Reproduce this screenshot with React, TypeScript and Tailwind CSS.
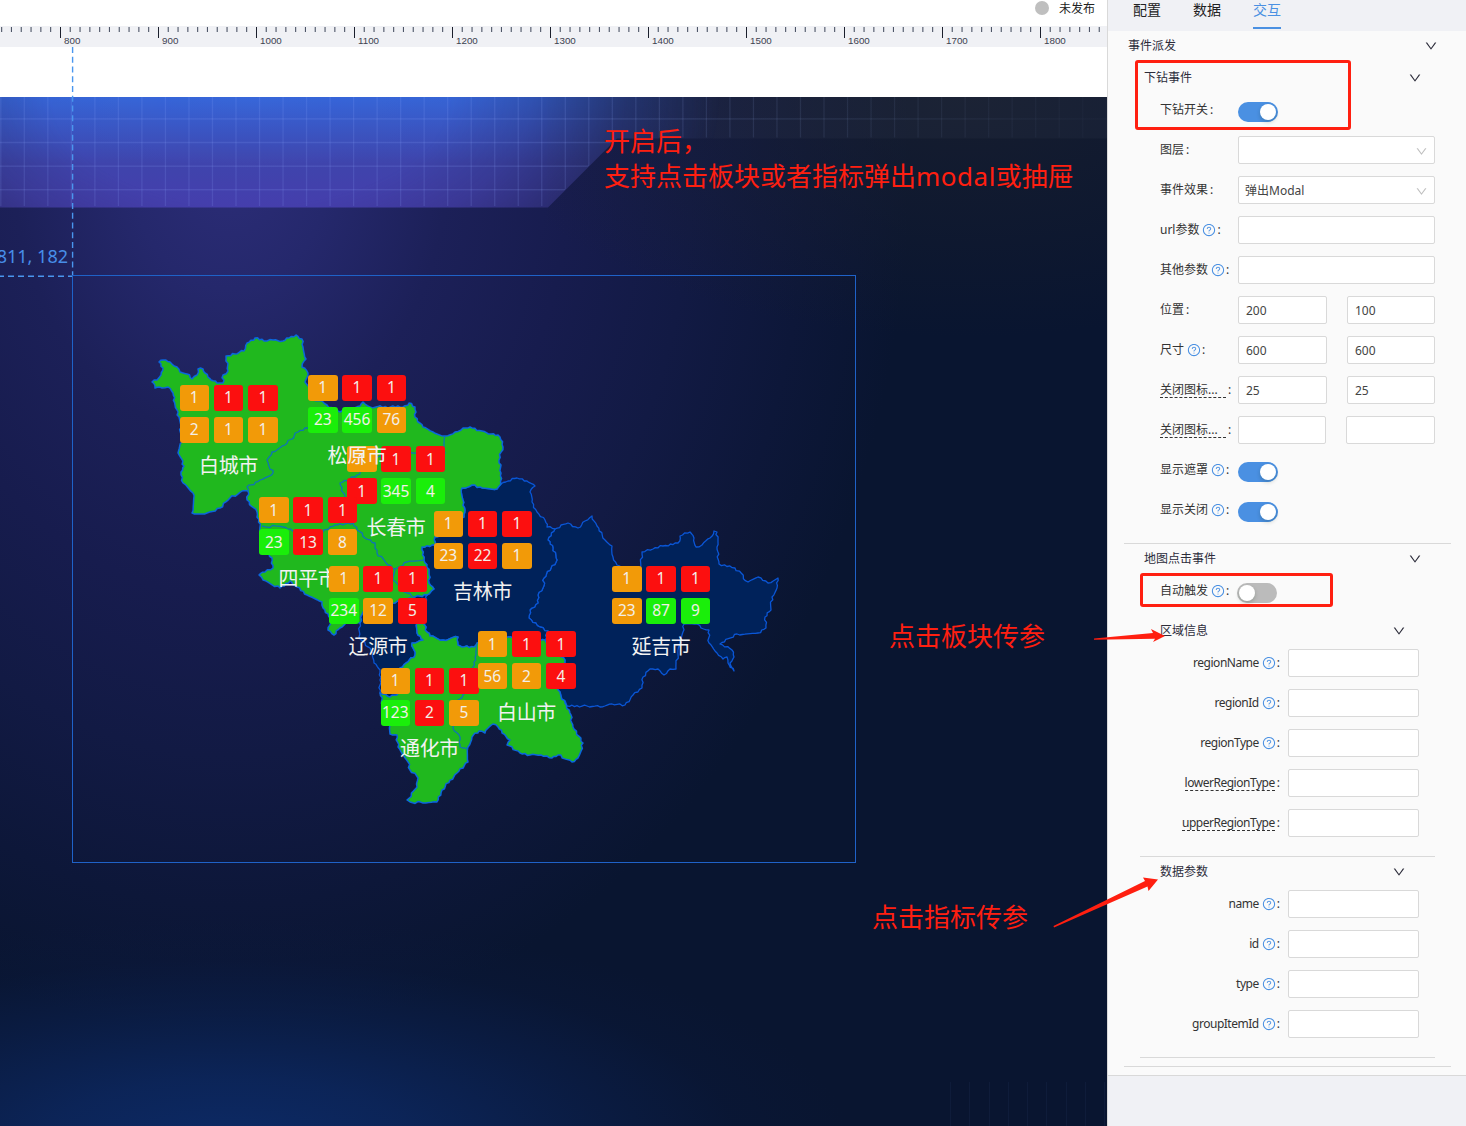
import React from "react";
import { AiOutlineDown, AiOutlineQuestionCircle } from "react-icons/ai";

type Tone = "o" | "r" | "g";
type City = { name: string; x: number; y: number; cells: [string, Tone][] };

const toneClass: Record<Tone, string> = {
  o: "bg-[#f29a08]",
  r: "bg-[#fc0f0f]",
  g: "bg-[#1aee0a]",
};

const top3: [string, Tone][] = [["1", "o"], ["1", "r"], ["1", "r"]];

const cities: City[] = [
  { name: "白城市", x: 179.5, y: 384.5, cells: [...top3, ["2", "o"], ["1", "o"], ["1", "o"]] },
  { name: "长春市", x: 347, y: 446, cells: [...top3, ["1", "r"], ["345", "g"], ["4", "g"]] },
  { name: "松原市", x: 308, y: 374.5, cells: [...top3, ["23", "g"], ["456", "g"], ["76", "o"]] },
  { name: "四平市", x: 259, y: 497, cells: [...top3, ["23", "g"], ["13", "r"], ["8", "o"]] },
  { name: "吉林市", x: 433.5, y: 510.5, cells: [...top3, ["23", "o"], ["22", "r"], ["1", "o"]] },
  { name: "辽源市", x: 329, y: 565.5, cells: [...top3, ["234", "g"], ["12", "o"], ["5", "r"]] },
  { name: "通化市", x: 380.5, y: 667.5, cells: [...top3, ["123", "g"], ["2", "r"], ["5", "o"]] },
  { name: "白山市", x: 477.5, y: 631, cells: [...top3, ["56", "o"], ["2", "o"], ["4", "r"]] },
  { name: "延吉市", x: 612, y: 565.5, cells: [...top3, ["23", "o"], ["87", "g"], ["9", "g"]] },
];

const northWest =
  "152,382 157,380 161,375 163,368 159,362 163,360 170,362 177,367 180,372 187,374 192,379 197,375 198,369 203,369 205,373 208,377 211,380 217,383 223,383 223,375 228,371 226,356 235,354 244,351 247,343 255,338 264,341 273,340 283,341 289,338 296,335 302,339 303,347 306,359 302,367 308,373 305,382 309,387 313,400 322,401 327,405 340,412 348,410 360,406 363,402 370,407 403,407 409,403 415,407 415,417 423,427 433,432 445,436 455,432 463,428 470,427 482,431 491,434 500,437 503,447 499,460 501,473 501,484 497,489 480,487 472,485 462,488 463,500 465,510 464,517 450,530 435,537 435,545 422,547 424,560 429,572 429,583 434,589 427,595 415,597 407,599 395,603 373,608 363,612 360,623 346,623 340,628 334,635 328,630 331,618 323,608 322,602 307,595 297,587 290,581 280,588 263,580 259,575 265,572 273,568 272,558 263,547 260,527 257,512 247,500 248,491 242,491 230,498 220,508 207,513 192,513 193,493 183,483 181,472 184,466 178,453 182,442 179,417 175,405 173,393 168,387 162,388 155,388";

const jilin =
  "501,484 508,481 517,478 527,481 535,486 530,492 532,502 537,512 545,520 547,527 555,529 548,540 553,548 557,560 544,578 543,588 538,595 538,603 530,610 529,618 540,627 548,631 545,640 508,637 477,643 474,647 462,647 458,645 458,637 443,640 430,636 427,632 423,623 424,607 427,595 434,589 429,583 429,572 424,560 422,547 435,545 435,537 450,530 464,517 465,510 463,500 462,488 472,485 480,487 497,489";

const yanji =
  "555,529 568,523 578,528 585,521 592,516 597,526 605,540 612,546 613,557 617,565 628,571 641,570 642,552 653,549 663,546 678,543 680,536 690,532 694,538 696,547 702,545 710,538 714,531 717,532 717,547 719,564 735,568 748,582 758,577 768,583 778,578 777,588 772,597 771,610 765,617 766,628 758,633 737,634 720,644 732,650 734,657 730,663 734,671 728,663 727,657 723,659 717,653 709,643 709,630 701,628 697,624 684,624 682,635 678,650 676,669 670,669 664,675 658,669 650,669 643,677 642,688 633,695 625,705 612,704 600,707 587,706 567,706 558,690 565,660 545,640 548,631 540,627 529,618 530,610 538,603 538,595 543,588 544,578 557,560 553,548 548,540";

const liaoyuan =
  "363,612 373,608 395,603 407,599 415,597 427,595 424,607 423,623 417,623 417,633 423,640 412,643 415,655 406,663 400,668 403,683 397,695 390,697 380,693 380,680 380,670 374,663 373,653 359,637 360,623";

const south =
  "417,623 423,623 427,632 430,636 443,640 458,637 458,645 462,647 474,647 477,643 508,637 545,640 556,651 565,660 558,690 565,703 570,713 573,727 583,743 578,758 572,762 558,755 552,758 541,755 530,755 520,753 507,745 510,740 502,733 498,727 493,724 485,733 479,731 472,737 468,747 468,762 457,773 442,790 437,802 423,803 410,802 407,800 417,787 418,778 410,770 408,762 398,747 397,735 390,734 390,725 385,713 380,693 390,697 397,695 403,683 400,668 406,663 415,655 412,643 423,640 417,633";

const borders = [
  "308,428 298,432 285,445 272,452 267,460 273,473 260,480 247,487 248,492",
  "445,436 445,453 413,453 380,456 357,475 340,483 345,497 353,523 335,525 320,533 297,533 283,527 262,526",
  "353,523 365,538 375,543 377,553 388,565 395,569 393,580 407,593 415,597",
  "395,569 407,562 424,560",
  "477,643 476,655 473,667 463,695 450,707 453,728 460,737 460,747 468,750",
];

/* Breaks every edge into short pieces with a small fixed offset, so borders look surveyed. */
function rough(points: string, closed: boolean): string {
  const pts = points.split(" ").map((p) => p.split(",").map(Number));
  const out: string[] = [];
  const count = closed ? pts.length : pts.length - 1;
  for (let i = 0; i < count; i++) {
    const [ax, ay] = pts[i];
    const [bx, by] = pts[(i + 1) % pts.length];
    // The offset is measured from the lesser endpoint so shared edges coincide.
    const swap = ax > bx || (ax === bx && ay > by);
    const [sx, sy, ex, ey] = swap ? [bx, by, ax, ay] : [ax, ay, bx, by];
    const len = Math.hypot(ex - sx, ey - sy);
    const n = Math.max(1, Math.round(len / 2.6));
    const seg: string[] = [];
    for (let k = 1; k < n; k++) {
      const t = k / n;
      const h = Math.sin(sx * 12.9 + sy * 78.2 + k * 37.7) * 43758.5;
      const d = (h - Math.floor(h) - 0.5) * 2.4;
      const px = sx + (ex - sx) * t - ((ey - sy) / len) * d;
      const py = sy + (ey - sy) * t + ((ex - sx) / len) * d;
      seg.push(`${px.toFixed(1)} ${py.toFixed(1)}`);
    }
    if (swap) seg.reverse();
    out.push(`${ax} ${ay}`, ...seg);
  }
  if (!closed) out.push(pts[pts.length - 1].join(" "));
  return "M" + out.join("L") + (closed ? "Z" : "");
}

function RegionMap() {
  return (
    <svg className="absolute left-0 top-0" width="1107" height="1029" viewBox="0 97 1107 1029" fill="none" strokeLinejoin="round">
      <g stroke="#0a56d6" strokeWidth="1.3">
        <path d={rough(yanji, true)} fill="#00225a" />
        <path d={rough(jilin, true)} fill="#00225a" />
        <path d={rough(liaoyuan, true)} fill="#00225a" />
      </g>
      <g stroke="#0b66dc" strokeWidth="1.5">
        <path d={rough(northWest, true)} fill="#20b81e" />
        <path d={rough(south, true)} fill="#20b81e" />
      </g>
      <g stroke="#0e74b4" strokeWidth="1.3">
        {borders.map((b) => (
          <path key={b} d={rough(b, false)} />
        ))}
      </g>
    </svg>
  );
}

function CityMarker({ city }: { city: City }) {
  return (
    <div className="absolute w-[98px]" style={{ left: city.x, top: city.y - 97 }}>
      <div className="grid grid-cols-[repeat(3,29.5px)] gap-x-[4.8px] gap-y-[6px]">
        {city.cells.map(([v, t], i) => (
          <div key={i} className={`flex h-[26px] items-center justify-center rounded-[3px] pt-px text-[15.5px] leading-none text-[#f3efe8] ${toneClass[t]}`}>
            {v}
          </div>
        ))}
      </div>
      <div className="mt-[8.5px] text-center text-[20px] leading-[30px] tracking-[-0.3px] text-[#f2f2f2]">{city.name}</div>
    </div>
  );
}

function HeaderBand() {
  const xs = Array.from({ length: 48 }, (_, i) => 0.7 + i * 23.52);
  const ys = [21.7, 45.3, 69, 92.5];
  return (
    <svg className="absolute left-0 top-0" width="1107" height="112" viewBox="0 0 1107 112">
      <defs>
        <linearGradient id="band" x1="0" x2="0" y1="0" y2="111" gradientUnits="userSpaceOnUse">
          <stop offset="0" stopColor="#3767da" />
          <stop offset="0.3" stopColor="#3b56c4" />
          <stop offset="0.6" stopColor="#4045ae" />
          <stop offset="1" stopColor="#463fae" />
        </linearGradient>
        <radialGradient id="bandFade" cx="0" cy="0" r="1" gradientUnits="userSpaceOnUse" gradientTransform="translate(250 0) scale(470 260)">
          <stop offset="0" stopColor="#fff" />
          <stop offset="0.42" stopColor="#f6f6f6" />
          <stop offset="0.6" stopColor="#b4b4b4" />
          <stop offset="0.8" stopColor="#444" />
          <stop offset="1" stopColor="#000" />
        </radialGradient>
        <mask id="bandMask" maskUnits="userSpaceOnUse" x="0" y="0" width="1107" height="112">
          <rect width="1107" height="112" fill="url(#bandFade)" />
        </mask>
        <linearGradient id="gridLine" x1="0" x2="1107" y1="0" y2="0" gradientUnits="userSpaceOnUse">
          <stop offset="0" stopColor="#90aaff" stopOpacity="0.15" />
          <stop offset="0.5" stopColor="#90aaff" stopOpacity="0.16" />
          <stop offset="0.75" stopColor="#90aadd" stopOpacity="0.11" />
          <stop offset="1" stopColor="#90aadd" stopOpacity="0.02" />
        </linearGradient>
        <clipPath id="bandClip">
          <path d="M0 0H1107V40.500H617L548 109.500H0Z" />
        </clipPath>
      </defs>
      <path d="M0 0H1107V41.500H617L548 110.500H0Z" fill="#8088a0" fillOpacity="0.06" />
      <path d="M0 0H1107V41.500H617L548 110.500H0Z" fill="url(#band)" mask="url(#bandMask)" />
      <g clipPath="url(#bandClip)" fill="url(#gridLine)">
        {xs.map((x) => (
          <rect key={x} x={x - 0.5} y="0" width="1.2" height="109" />
        ))}
        {ys.map((y) => (
          <rect key={y} x="0" y={y - 0.5} width="1107" height="1.4" />
        ))}
      </g>
    </svg>
  );
}

function Ruler() {
  const ticks = Array.from({ length: 114 }, (_, i) => i - 6);
  return (
    <svg className="block h-[21px] w-full bg-[#f0f1f5]" viewBox="0 0 1107 21" fontFamily="Liberation Sans, Arial, sans-serif" fontSize="9.8">
      {ticks.map((i) => {
        const x = 60.4 + i * 9.8;
        const major = i % 10 === 0;
        return (
          <g key={i}>
            <rect x={major ? Math.round(x) : x - 0.5} y="1" width={major ? 1 : 1.1} height={major ? 11 : 5} fill={major ? "#1b1f2c" : "#4d5567"} />
            {major && <text x={x + 3.6} y="18" fill="#3d4150">{800 + i * 10}</text>}
          </g>
        );
      })}
    </svg>
  );
}

function Note({ className, children }: { className: string; children: React.ReactNode }) {
  return <div className={`absolute whitespace-nowrap text-[26px] leading-[35px] text-[#ff1f10] ${className}`}>{children}</div>;
}

function Workspace() {
  return (
    <main className="flex w-[1107px] flex-col bg-white">
      <header className="flex h-[26px] items-start justify-end pr-[12px]">
        <span className="mt-[1px] h-[14px] w-[14px] rounded-full bg-[#bfbfbf]" />
        <span className="ml-[10px] text-[12px] leading-[17px] text-[#222]">未发布</span>
      </header>
      <Ruler />
      <div className="h-[50px]" />
      <section className="relative h-[1029px] overflow-hidden bg-[#091530]">
        <div className="absolute inset-0 bg-[radial-gradient(ellipse_680px_880px_at_230px_60px,#2c2d78_0%,#25286c_15%,#1c2058_32%,#171c4e_50%,#121a44_68%,#0d1739_85%,#091530_100%)]" />
        <div className="absolute inset-0 bg-[radial-gradient(ellipse_620px_230px_at_230px_1050px,#0c2a66_0%,#0c265ce6_30%,#0b204e99_60%,#0a1a4040_82%,#09153000_100%)]" />
        <div className="absolute inset-y-0 right-0 h-[260px] w-[560px] bg-[radial-gradient(ellipse_500px_240px_at_420px_0px,rgba(30,34,46,0.6),transparent)]" />
        <HeaderBand />
        <RegionMap />
        {cities.map((c) => (
          <CityMarker key={c.name} city={c} />
        ))}
        <div className="absolute left-[72px] top-[178px] h-[588px] w-[784px] border border-[#1f62c8]" />
        <div className="absolute right-[1039px] top-[146px] whitespace-nowrap text-[18px] leading-[26px] text-[#478ee8]">811, 182</div>
        <div className="absolute bottom-0 right-0 h-[44px] w-[157px] bg-[repeating-linear-gradient(90deg,rgba(90,120,190,0.07)_0_1px,transparent_1px_19.300px)]" />
        <Note className="left-[604px] top-[27px]">
          开启后，
          <br />
          支持点击板块或者指标弹出<span className="tracking-[0.5px]">modal</span>或抽屉
        </Note>
        <Note className="left-[889px] top-[522px]">点击板块传参</Note>
        <Note className="left-[872px] top-[803px]">点击指标传参</Note>
      </section>
    </main>
  );
}

function Help() {
  return <AiOutlineQuestionCircle className="-mr-px -mt-px ml-[3px] h-[14px] w-[14px] shrink-0 text-[#4a90e2]" />;
}

function Label({ text, help, dashed }: { text: string; help?: boolean; dashed?: boolean }) {
  return (
    <span className="flex items-center whitespace-nowrap">
      <span className={dashed ? "border-b border-dashed border-[#333] leading-[15px]" : "leading-[18px]"}>{text}</span>
      {help && <Help />}
      <span className="ml-[2px]">:</span>
    </span>
  );
}

function Row({ text, help, children }: { text: string; help?: boolean; children: React.ReactNode }) {
  return (
    <div className="flex h-[40px] items-center pl-[52px]">
      <div className="w-[78px]">
        <Label text={text} help={help} />
      </div>
      {children}
    </div>
  );
}

function TruncatedRow({ children }: { children: React.ReactNode }) {
  return (
    <div className="flex h-[40px] items-center pl-[52px]">
      <div className="flex w-[78px] items-center">
        <span className="w-[66px] border-b border-dashed border-[#333] leading-[15px]">关闭图标...</span>
        <span className="ml-[2px]">:</span>
      </div>
      {children}
    </div>
  );
}

function Box({ className, children }: { className: string; children?: React.ReactNode }) {
  return (
    <div className={`flex h-[28px] items-center justify-between rounded-[2px] border border-[#d9d9d9] bg-white px-[7px] pt-[2px] text-[#444] ${className}`}>
      {children}
    </div>
  );
}

function Select({ value }: { value?: string }) {
  return (
    <Box className="w-[197px]">
      <span className="-ml-px">{value}</span>
      <AiOutlineDown className="-mr-px h-[13px] w-[13px] text-[#bfbfbf]" />
    </Box>
  );
}

function Toggle({ on }: { on?: boolean }) {
  return (
    <span className={on ? "mt-[4px] flex h-[20px] w-[40px] items-center justify-end rounded-full bg-[#4a90e2] px-[2px]" : "-ml-px mt-[4px] flex h-[20px] w-[40px] items-center rounded-full bg-[#bbbbbb] px-[2px]"}>
      <span className="h-[16px] w-[16px] rounded-full bg-white shadow-[0_2px_4px_rgba(0,35,11,0.2)]" />
    </span>
  );
}

function SectionHead({ title, className }: { title: string; className: string }) {
  return (
    <div className={`flex items-center justify-between text-[#2c2c3a] ${className}`}>
      <span>{title}</span>
      <AiOutlineDown className="h-[14px] w-[14px]" />
    </div>
  );
}

function ParamRow({ text, dashed }: { text: string; dashed?: boolean }) {
  return (
    <div className="flex h-[40px] items-center justify-end pr-[47px] tracking-[-0.48px]">
      <Label text={text} help={!dashed} dashed={dashed} />
      <Box className="ml-[8.5px] w-[131px]" />
    </div>
  );
}

function SidePanel() {
  return (
    <aside className="relative flex w-[359px] flex-col border-l border-[#d9d9d9] bg-[#f0f1f5] text-[12px] leading-[18px] text-[#333]">
      <nav className="flex h-[31px] gap-[32px] pl-[25px] text-[14px] leading-[20px] text-[#222]">
        <span>配置</span>
        <span>数据</span>
        <span className="h-[29px] border-b-2 border-[#4a90e2] text-[#4a90e2]">交互</span>
      </nav>
      <div className="h-[1045px] border-b border-[#d9d9d9] bg-[#fafafa]">
        <SectionHead title="事件派发" className="h-[29px] pl-[20px] pr-[28px]" />
        <SectionHead title="下钻事件" className="h-[30px] pl-[36px] pr-[44px] pt-[5px]" />
        <Row text="下钻开关"><Toggle on /></Row>
        <Row text="图层"><Select /></Row>
        <Row text="事件效果"><Select value="弹出Modal" /></Row>
        <Row text="url参数" help><Box className="w-[197px]" /></Row>
        <Row text="其他参数" help><Box className="w-[197px]" /></Row>
        <Row text="位置"><Box className="w-[89px]">200</Box><Box className="ml-[20px] w-[88px]">100</Box></Row>
        <Row text="尺寸" help><Box className="w-[89px]">600</Box><Box className="ml-[20px] w-[88px]">600</Box></Row>
        <TruncatedRow><Box className="w-[89px]">25</Box><Box className="ml-[20px] w-[88px]">25</Box></TruncatedRow>
        <TruncatedRow><Box className="w-[88px]" /><Box className="ml-[20px] w-[89px]" /></TruncatedRow>
        <Row text="显示遮罩" help><Toggle on /></Row>
        <Row text="显示关闭" help><Toggle on /></Row>
        <div className="ml-[16px] mr-[15px] mt-[13px] h-px bg-[#d9d9d9]" />
        <SectionHead title="地图点击事件" className="h-[28px] pl-[36px] pr-[44px] pt-px" />
        <div className="-mt-px"><Row text="自动触发" help><Toggle /></Row></div>
        <SectionHead title="区域信息" className="h-[32px] pl-[52px] pr-[60px] pt-[7px]" />
        <ParamRow text="regionName" />
        <ParamRow text="regionId" />
        <ParamRow text="regionType" />
        <ParamRow text="lowerRegionType" dashed />
        <ParamRow text="upperRegionType" dashed />
        <div className="ml-[32px] mr-[31px] mt-[13px] h-px bg-[#d9d9d9]" />
        <SectionHead title="数据参数" className="h-[27px] pl-[52px] pr-[60px] pt-[2px]" />
        <ParamRow text="name" />
        <ParamRow text="id" />
        <ParamRow text="type" />
        <ParamRow text="groupItemId" />
        <div className="ml-[32px] mr-[31px] mt-[13px] h-px bg-[#d9d9d9]" />
        <div className="ml-[16px] mr-[15px] mt-[8px] h-px bg-[#d9d9d9]" />
      </div>
      <div className="absolute left-[27px] top-[60px] h-[70px] w-[216px] rounded-[3px] border-[3px] border-[#ff1f10]" />
      <div className="absolute left-[32px] top-[573px] h-[34px] w-[193px] rounded-[3px] border-[3px] border-[#ff1f10]" />
    </aside>
  );
}

export default function App() {
  return (
    <div className="relative flex h-[1126px] w-[1466px] overflow-hidden font-['Noto_Sans','Noto_Sans_CJK_SC',sans-serif]">
      <Workspace />
      <SidePanel />
      <svg className="pointer-events-none absolute left-0 top-0" width="1466" height="1126" fill="none">
        <path d="M72.600 47V275" stroke="#4a96ee" strokeWidth="1.400" strokeDasharray="6 3.750" />
        <path d="M0 276.300H72" stroke="#4a96ee" strokeWidth="1.400" strokeDasharray="6 4" strokeDashoffset="2" />
        <path d="M1094 638.500L1153 633L1151 629L1165 636L1153 642L1155 638.800L1094 639.800Z" fill="#ff1f10" />
        <path d="M1053.500 926L1145 881L1143 877.500L1158 879.500L1148.500 891L1147.500 886.500L1054 927.500Z" fill="#ff1f10" />
      </svg>
    </div>
  );
}
